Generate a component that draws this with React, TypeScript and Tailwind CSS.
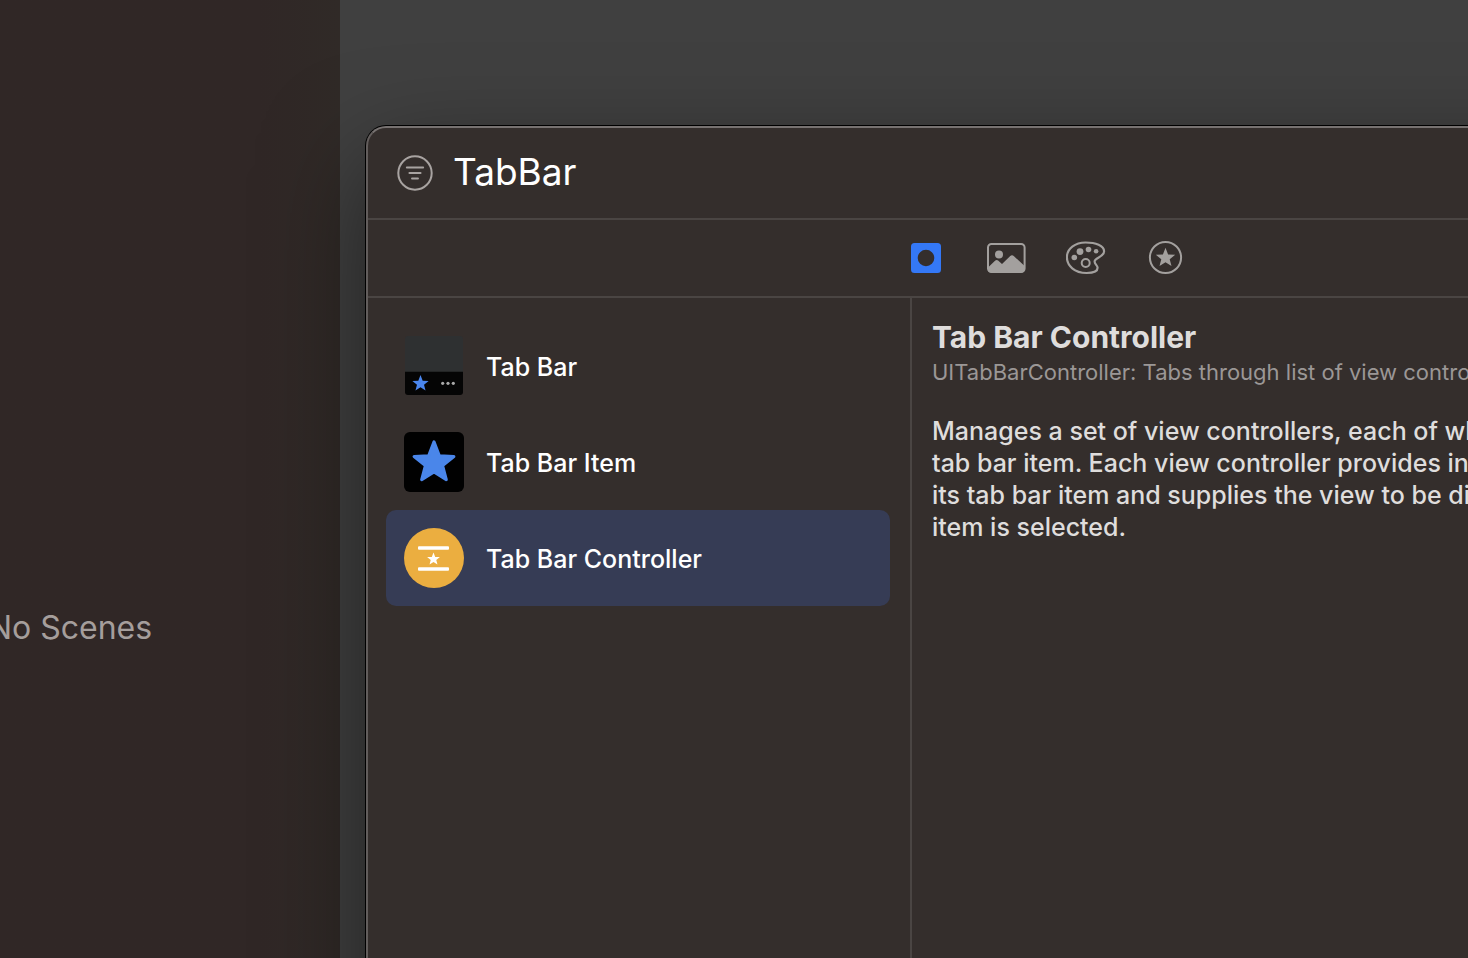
import React, { useState } from 'react';

interface LibraryItem {
  id: string;
  name: string;
  icon: React.ReactNode;
}

interface LibraryTab {
  id: string;
  label: string;
  icon: React.ReactNode;
}

const STAR = 'M0 -10 L2.6 -3.2 L9.7 -2.9 L4.2 1.6 L6 8.4 L0 4.6 L-6 8.4 L-4.2 1.6 L-9.7 -2.9 L-2.6 -3.2 Z';

const FilterIcon = () => (
  <svg viewBox="0 0 36 36" className="h-9 w-9" fill="none" stroke="currentColor" strokeLinecap="round" aria-hidden="true">
    <circle cx="18" cy="18" r="16.7" strokeWidth="2" />
    <path d="M9.8 12.5H26.2M12.4 18H23.6M15 23.5H21" strokeWidth="1.9" />
  </svg>
);

const ObjectsIcon = () => (
  <svg viewBox="0 0 40 40" className="h-10 w-10" aria-hidden="true">
    <path
      fillRule="evenodd"
      fill="currentColor"
      d="M8.5 5H31.5Q35 5 35 8.5V31.5Q35 35 31.5 35H8.5Q5 35 5 31.5V8.5Q5 5 8.5 5ZM20 11.7A8.3 8.3 0 1 0 20 28.3A8.3 8.3 0 1 0 20 11.7Z"
    />
  </svg>
);

const MediaIcon = () => (
  <svg viewBox="0 0 40 40" className="h-10 w-10" aria-hidden="true">
    <rect x="2" y="6" width="36.6" height="28" rx="3.5" fill="none" stroke="currentColor" strokeWidth="2" />
    <circle cx="13" cy="16.4" r="4" fill="currentColor" />
    <path
      fill="currentColor"
      d="M2 29.5L9.3 22.6Q10.7 21.4 12.1 22.6L16 26L24 18.2Q26 16.4 28 18.2L38.6 28V31Q38.6 34.5 35.1 34.5H5.5Q2 34.5 2 31Z"
    />
  </svg>
);

const ColorsIcon = () => (
  <svg viewBox="0 0 40 40" className="h-10 w-10" aria-hidden="true">
    <g transform="translate(-.9 -.2)">
      <path
        fill="none"
        stroke="currentColor"
        strokeWidth="2.2"
        strokeLinejoin="round"
        d="M20.5 4.7C10 4.7 1.8 11 1.8 19.5C1.8 28 9.5 35.2 21.5 35.2C28 35.2 32.5 33.5 32.5 30C32.5 27.5 29.5 26.5 29.5 23.7C29.5 19.5 39 19.5 39 13.5C39 7.8 30.5 4.7 20.5 4.7Z"
      />
      <circle cx="14.9" cy="13.8" r="3.4" fill="currentColor" />
      <circle cx="23.4" cy="11.7" r="2.8" fill="currentColor" />
      <circle cx="31" cy="13.4" r="2.3" fill="currentColor" />
      <circle cx="9.2" cy="19.7" r="2.8" fill="currentColor" />
      <circle cx="20.6" cy="25.2" r="4" fill="none" stroke="currentColor" strokeWidth="2" />
    </g>
  </svg>
);

const SymbolsIcon = () => (
  <svg viewBox="0 0 40 40" className="h-10 w-10" aria-hidden="true">
    <circle cx="19.5" cy="19.5" r="15.6" fill="none" stroke="currentColor" strokeWidth="2" />
    <path d={STAR} transform="translate(19.5 19.7)" fill="currentColor" />
  </svg>
);

const TabBarThumb = () => (
  <svg viewBox="0 0 60 60" className="h-[60px] w-[60px] shrink-0" aria-hidden="true">
    <path fill="#2e3031" d="M4 0H56Q59 0 59 3V36H1V3Q1 0 4 0Z" />
    <path fill="#050505" d="M1 35.8H59V56Q59 59 56 59H4Q1 59 1 56Z" />
    <path d={STAR} transform="translate(16.5 47.4) scale(.84)" fill="#4a86ee" />
    <g fill="#a9a9a9">
      <circle cx="38.7" cy="47.3" r="1.6" />
      <circle cx="44" cy="47.3" r="1.6" />
      <circle cx="49.3" cy="47.3" r="1.6" />
    </g>
  </svg>
);

const TabBarItemThumb = () => (
  <svg viewBox="0 0 60 60" className="h-[60px] w-[60px] shrink-0" aria-hidden="true">
    <rect width="60" height="60" rx="6" fill="#010101" />
    <path
      d={STAR}
      transform="translate(30 30.4) scale(2.05)"
      fill="#4a86ea"
      stroke="#4a86ea"
      strokeWidth="1.5"
      strokeLinejoin="round"
    />
  </svg>
);

const TabBarControllerThumb = () => (
  <svg viewBox="0 0 60 60" className="h-[60px] w-[60px] shrink-0" aria-hidden="true">
    <circle cx="30" cy="30" r="30" fill="#ebae40" />
    <rect x="14" y="18.2" width="31" height="3.5" rx="1" fill="#fff" />
    <rect x="14" y="39.3" width="31" height="3.5" rx="1" fill="#fff" />
    <path d={STAR} transform="translate(29.5 31) scale(.66)" fill="#fff" />
  </svg>
);

const tabs: LibraryTab[] = [
  { id: 'objects', label: 'Objects', icon: <ObjectsIcon /> },
  { id: 'media', label: 'Media', icon: <MediaIcon /> },
  { id: 'colors', label: 'Colors', icon: <ColorsIcon /> },
  { id: 'symbols', label: 'Symbols', icon: <SymbolsIcon /> },
];

const items: LibraryItem[] = [
  { id: 'tab-bar', name: 'Tab Bar', icon: <TabBarThumb /> },
  { id: 'tab-bar-item', name: 'Tab Bar Item', icon: <TabBarItemThumb /> },
  { id: 'tab-bar-controller', name: 'Tab Bar Controller', icon: <TabBarControllerThumb /> },
];

const ItemDetail = () => (
  <article className="flex-1 whitespace-nowrap px-5 py-5 text-[#dfdddc]">
    <h2 className="text-[30px] leading-[38px] font-bold">Tab Bar Controller</h2>
    <p className="text-[22px] leading-8 text-[#9b9796]">UITabBarController: Tabs through list of view controllers</p>
    <p className="mt-[27px] text-[25px] leading-8 font-medium">
      Manages a set of view controllers, each of which represents a<br />
      tab bar item. Each view controller provides information about<br />
      its tab bar item and supplies the view to be displayed when the<br />
      item is selected.
    </p>
  </article>
);

const LibraryWindow = () => {
  const [query, setQuery] = useState('TabBar');
  const [activeTab, setActiveTab] = useState('objects');
  const [selected, setSelected] = useState('tab-bar-controller');

  return (
    <section
      aria-label="Library"
      className="absolute top-[126px] -bottom-40 left-[366px] flex w-[1360px] flex-col rounded-[20px] border-2 border-[#625d5c] border-t-[#777271] bg-[#342e2c] shadow-[0_0_0_1px_#000,0_36px_100px_rgba(0,0,0,0.5)]"
    >
      <label className="flex h-[92px] items-center gap-5 border-b-2 border-[#4a4543] px-[29px] text-[#a8a3a1]">
        <FilterIcon />
        <input
          type="text"
          aria-label="Search library"
          value={query}
          onChange={(e) => setQuery(e.target.value)}
          className="min-w-0 flex-1 bg-transparent pb-0.5 text-[37px] leading-[48px] text-white outline-none"
        />
      </label>

      <div className="flex h-[78px] items-center justify-center gap-10 border-b-2 border-[#4a4543]">
        {tabs.map((tab) => (
          <button
            key={tab.id}
            type="button"
            aria-label={tab.label}
            onClick={() => setActiveTab(tab.id)}
            className={tab.id === activeTab ? 'text-[#3478f6]' : 'text-[#a3a09e]'}
          >
            {tab.icon}
          </button>
        ))}
      </div>

      <div className="flex flex-1">
        <ul className="w-[544px] shrink-0 border-r-2 border-[#4a4543] py-5 pr-5 pl-[18px]">
          {items.map((item) => (
            <li key={item.id}>
              <button
                type="button"
                onClick={() => setSelected(item.id)}
                className={
                  item.id === selected
                    ? 'flex h-24 w-full items-center gap-[22px] rounded-[10px] bg-[#363c55] px-[18px]'
                    : 'flex h-24 w-full items-center gap-[22px] rounded-[10px] px-[18px]'
                }
              >
                {item.icon}
                <span className="pt-0.5 text-[25px] leading-8 font-medium text-white">{item.name}</span>
              </button>
            </li>
          ))}
        </ul>
        <ItemDetail />
      </div>
    </section>
  );
};

export default function App() {
  return (
    <main className="relative flex h-screen overflow-hidden bg-[#404040] font-['Inter',sans-serif]">
      <aside className="-ml-[200px] w-[540px] shrink-0 bg-linear-to-r from-[#302726] from-85% to-[#302a27] pt-[608px] text-center text-[32px] leading-10 text-[#a59e9c]">
        No Scenes
      </aside>
      <LibraryWindow />
    </main>
  );
}
